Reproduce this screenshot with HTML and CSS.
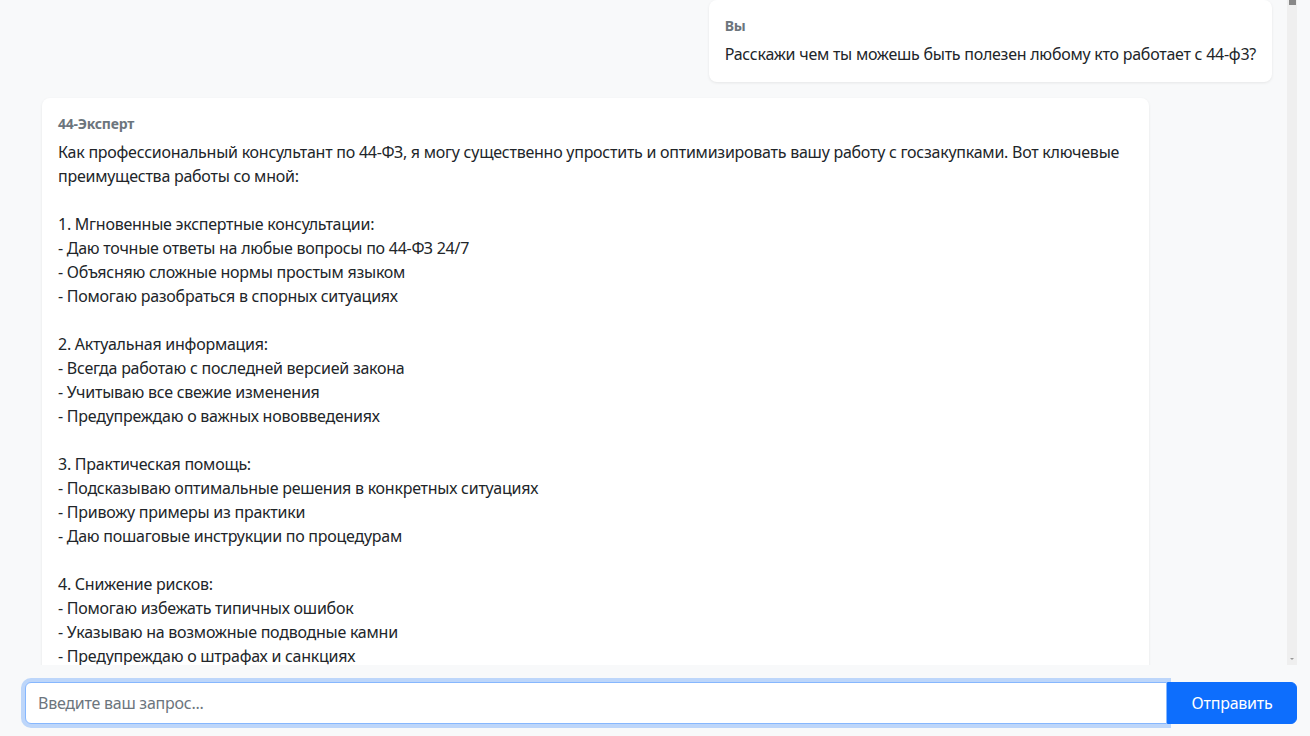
FILE: index.html
```html
<!DOCTYPE html>
<html>
  <head>
    <title>44-Эксперт</title>
    <meta charset="UTF-8" />
    <link rel="stylesheet" href="styles.css">
  </head>

  <body>
    <div class="app">
      <div class="chatWrap">
        <div class="chatBox">
          <div class="msg msgUser">
            <div class="msgName">Вы</div>
            <div class="msgText">Расскажи чем ты можешь быть полезен любому кто работает с 44-ф3?</div>
          </div>

          <div class="msg msgBot">
            <div class="msgName">44-Эксперт</div>
            <div class="msgText">Как профессиональный консультант по 44-ФЗ, я могу существенно упростить и оптимизировать вашу работу с госзакупками. Вот ключевые преимущества работы со мной:

1. Мгновенные экспертные консультации:
- Даю точные ответы на любые вопросы по 44-ФЗ 24/7
- Объясняю сложные нормы простым языком
- Помогаю разобраться в спорных ситуациях

2. Актуальная информация:
- Всегда работаю с последней версией закона
- Учитываю все свежие изменения
- Предупреждаю о важных нововведениях

3. Практическая помощь:
- Подсказываю оптимальные решения в конкретных ситуациях
- Привожу примеры из практики
- Даю пошаговые инструкции по процедурам

4. Снижение рисков:
- Помогаю избежать типичных ошибок
- Указываю на возможные подводные камни
- Предупреждаю о штрафах и санкциях

5. Экономия времени:
- Быстро нахожу нужные нормы и разъяснения
- Помогаю подготовить документацию
- Проверяю сроки и порядок действий

Обращайтесь с любыми вопросами по закупкам!</div>
          </div>
        </div>
      </div>

      <form class="inputRow" onsubmit="return false">
        <input class="chatInput" type="text" placeholder="Введите ваш запрос...">
        <button class="sendBtn" type="submit">Отправить</button>
      </form>
    </div>
  </body>
</html>
```

FILE: styles.css
```css
html * {
  margin: 0;
  padding: 0;
  box-sizing: border-box;
}

body {
  font-family: "Noto Sans", "Open Sans", sans-serif;
  background-color: #f8f9fa;
  color: #212529;
}

.app {
  height: 100vh;
  display: flex;
  flex-direction: column;
  padding: 0 13px 12px 25px;
}

.chatWrap {
  flex: 1;
  min-height: 0;
  position: relative;
  margin-bottom: 17px;
  /* scrollbar track + thumb (scrolled to top) */
  background:
    linear-gradient(#888, #888) right 1px top 0 / 7px 5px no-repeat,
    linear-gradient(to left, #efefef 10px, transparent 10px);
}

/* little down arrow at the bottom of the track */
.chatWrap::after {
  content: "";
  position: absolute;
  right: 3px;
  bottom: 5px;
  border-left: 2px solid transparent;
  border-right: 2px solid transparent;
  border-top: 2px solid #999;
}

.chatBox {
  height: 100%;
  overflow-y: hidden;
  padding: 0 25px 16px 17px;
  display: flex;
  flex-direction: column;
  gap: 16px;
}

.msg {
  flex-shrink: 0;
  background: #fff;
  border-radius: 8px;
  padding: 16px;
  box-shadow: 0 1px 3px rgba(0, 0, 0, 0.08);
  max-width: 90%;
}

.msgUser {
  align-self: flex-end;
}

.msgBot {
  align-self: flex-start;
}

.msgName {
  font-size: 14px;
  line-height: 20px;
  font-weight: bold;
  letter-spacing: -0.25px;
  color: #6c757d;
  margin-bottom: 6px;
}

.msgText {
  font-size: 16px;
  line-height: 24px;
  letter-spacing: -0.25px;
  white-space: pre-wrap;
}

.inputRow {
  display: flex;
  height: 42px;
}

.chatInput {
  flex: 1;
  font-family: inherit;
  font-size: 16px;
  letter-spacing: -0.25px;
  color: #212529;
  padding: 8px 12px;
  border: 1px solid #86b7fe;
  border-radius: 6px 0 0 6px;
  box-shadow: 0 0 0 4px rgba(13, 110, 253, 0.25);
  outline: none;
}

.chatInput::placeholder {
  color: #6c757d;
}

.sendBtn {
  position: relative;
  font-family: inherit;
  font-size: 16px;
  letter-spacing: -0.25px;
  color: #fff;
  background-color: #0d6efd;
  border: 1px solid #0d6efd;
  border-radius: 0 6px 6px 0;
  padding: 8px 20px;
  width: 130px;
}
```
